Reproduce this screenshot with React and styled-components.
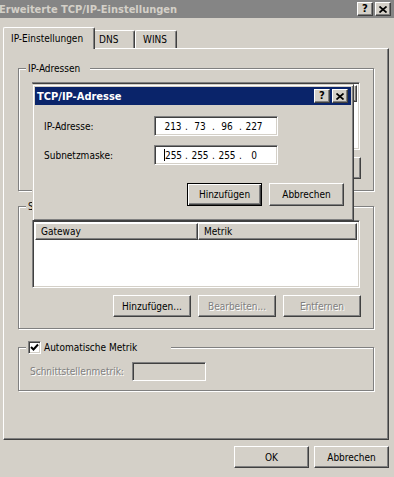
import React from "react";
import styled, { createGlobalStyle, css } from "styled-components";

const GlobalStyle = createGlobalStyle`
  html, body {
    margin: 0;
    padding: 0;
    background: #d4d0c8;
  }
  body {
    font-family: "DejaVu Sans Condensed", "Liberation Sans", sans-serif;
    font-size: 10px;
    color: #000;
  }
`;

const raised = css`
  border: 1px solid;
  border-color: #fff #404040 #404040 #fff;
  box-shadow: inset -1px -1px #808080;
`;

const sunken = css`
  border: 1px solid;
  border-color: #808080 #fff #fff #808080;
  box-shadow: inset 1px 1px #404040, inset -1px -1px #d4d0c8;
`;

const Window = styled.div`
  position: relative;
  width: 394px;
  height: 477px;
  overflow: hidden;
  background: #d4d0c8;
  display: flex;
  flex-direction: column;
`;

const TitleBar = styled.div`
  height: 18px;
  flex: 0 0 auto;
  display: flex;
  align-items: center;
  justify-content: space-between;
  padding-right: 3px;
  background: ${(p) => (p.active ? "#0a246a" : "#858585")};
  color: ${(p) => (p.active ? "#fff" : "#d4d0c8")};
  font-weight: bold;
  font-size: 11px;
`;

const TitleText = styled.span`
  white-space: nowrap;
  margin-left: ${(p) => p.indent || 0}px;
`;

const CaptionButtons = styled.div`
  display: flex;
  gap: 2px;
`;

const CaptionButton = styled.div`
  box-sizing: border-box;
  width: 16px;
  height: 14px;
  ${raised};
  background: #d4d0c8;
  display: flex;
  align-items: center;
  justify-content: center;
  color: #000;
  font-family: "DejaVu Sans", sans-serif;
  font-weight: bold;
  font-size: 10px;
  line-height: 1;
`;

const Content = styled.div`
  flex: 1;
  padding: 9px 5px 0 3px;
  display: flex;
  flex-direction: column;
`;

const TabStrip = styled.div`
  display: flex;
  align-items: flex-end;
  height: 21px;
  padding-left: 2px;
  position: relative;
  z-index: 1;
`;

const Tab = styled.div`
  box-sizing: border-box;
  width: ${(p) => p.width}px;
  height: ${(p) => (p.selected ? 22 : 18)}px;
  margin: 0 ${(p) => (p.selected ? -2 : 0)}px ${(p) => (p.selected ? -1 : 0)}px;
  padding: ${(p) => (p.selected ? 5 : 3)}px 0 0 ${(p) => p.pad || 5}px;
  position: relative;
  z-index: ${(p) => (p.selected ? 2 : 1)};
  background: #d4d0c8;
  border-top: 1px solid #fff;
  border-left: 1px solid #fff;
  border-right: 1px solid #404040;
  border-radius: 2px 2px 0 0;
  box-shadow: inset -1px 0 #808080;
  white-space: nowrap;
`;

const Panel = styled.div`
  box-sizing: border-box;
  height: 392px;
  ${raised};
  background: #d4d0c8;
  padding: 13px 14px 0 14px;
  display: flex;
  flex-direction: column;
  position: relative;
`;

const Group = styled.fieldset`
  margin: ${(p) => p.top || 0}px 0 0;
  padding: 0;
  min-width: 0;
  height: ${(p) => p.height}px;
  box-sizing: border-box;
  border: 1px solid #808080;
  box-shadow: inset 1px 1px #fff, 1px 1px #fff;
`;

const Legend = styled.legend`
  margin-left: 7px;
  padding: 0 ${(p) => p.padRight || 3}px 0 2px;
  line-height: 13px;
  height: 13px;
  background: #d4d0c8;
  display: flex;
  align-items: center;
  gap: 3px;
`;

const GroupBody = styled.div`
  padding: ${(p) => p.padding};
  display: flex;
  flex-direction: ${(p) => (p.row ? "row" : "column")};
  align-items: ${(p) => (p.row ? "center" : "stretch")};
`;

const ListView = styled.div`
  box-sizing: border-box;
  height: 68px;
  margin: 0 13px;
  ${sunken};
  background: #fff;
  padding: 2px;
`;

const ListHeader = styled.div`
  display: flex;
  height: 17px;
`;

const HeaderCell = styled.div`
  box-sizing: border-box;
  width: ${(p) => p.width}px;
  flex: ${(p) => (p.grow ? "1" : "0 0 auto")};
  ${raised};
  background: #d4d0c8;
  padding: 2px 0 0 5px;
  line-height: 12px;
`;

const ButtonRow = styled.div`
  display: flex;
  justify-content: flex-end;
  gap: ${(p) => p.gap || 7}px;
  margin-top: ${(p) => p.top || 0}px;
  padding-right: ${(p) => p.right || 0}px;
`;

const Button = styled.div`
  box-sizing: border-box;
  width: ${(p) => p.width || 75}px;
  height: ${(p) => p.height || 23}px;
  background: #d4d0c8;
  display: flex;
  align-items: center;
  justify-content: center;
  white-space: nowrap;
  ${(p) =>
    p.primary
      ? css`
          border: 1px solid #000;
          box-shadow: inset 1px 1px #fff, inset -1px -1px #404040,
            inset -2px -2px #808080;
        `
      : raised};
  color: ${(p) => (p.disabled ? "#808080" : "#000")};
  text-shadow: ${(p) => (p.disabled ? "1px 1px #fff" : "none")};
`;

const CheckBox = styled.div`
  box-sizing: border-box;
  width: 13px;
  height: 13px;
  ${sunken};
  background: #fff;
  display: flex;
  align-items: center;
  justify-content: center;
`;

const FieldLabel = styled.span`
  color: ${(p) => (p.disabled ? "#808080" : "#000")};
  text-shadow: ${(p) => (p.disabled ? "1px 1px #fff" : "none")};
  white-space: nowrap;
`;

const TextBox = styled.div`
  box-sizing: border-box;
  width: ${(p) => p.width}px;
  height: ${(p) => p.height || 20}px;
  margin-left: ${(p) => p.left || 0}px;
  ${sunken};
  background: ${(p) => (p.disabled ? "#d4d0c8" : "#fff")};
  display: flex;
  align-items: center;
  padding-left: 7px;
`;

const Octet = styled.span`
  width: 22px;
  text-align: center;
  display: inline-flex;
  justify-content: center;
  align-items: center;
`;

const Dot = styled.span`
  width: 5px;
  text-align: center;
`;

const Caret = styled.span`
  display: inline-block;
  width: 1px;
  height: 12px;
  background: #000;
`;

const Dialog = styled.div`
  position: absolute;
  left: 32px;
  top: 84px;
  width: 322px;
  height: 137px;
  box-sizing: border-box;
  border: 1px solid;
  border-color: #d4d0c8 #404040 #404040 #d4d0c8;
  box-shadow: inset 1px 1px #fff, inset -1px -1px #808080;
  background: #d4d0c8;
  padding: 2px;
  z-index: 5;
`;

const DialogBody = styled.div`
  padding: 11px 7px 0 9px;
`;

const FormGrid = styled.div`
  display: grid;
  grid-template-columns: 110px 124px;
  row-gap: 9px;
  align-items: center;
`;

const CloseGlyph = () => (
  <svg width="8" height="7" viewBox="0 0 8 7">
    <path d="M0.5 0.5 L7.5 6.5 M7.5 0.5 L0.5 6.5" stroke="#000" strokeWidth="1.7" />
  </svg>
);

const CheckGlyph = () => (
  <svg width="9" height="9" viewBox="0 0 9 9">
    <polyline points="1,4 3.5,6.5 8,1.5" fill="none" stroke="#000" strokeWidth="2" />
  </svg>
);

const Caption = () => (
  <CaptionButtons>
    <CaptionButton>?</CaptionButton>
    <CaptionButton>
      <CloseGlyph />
    </CaptionButton>
  </CaptionButtons>
);

const IpField = ({ parts, caret }) => (
  <TextBox width={124}>
    {parts.map((part, i) => (
      <React.Fragment key={i}>
        {i > 0 && <Dot>.</Dot>}
        <Octet>
          {caret && i === 0 && <Caret />}
          {part}
        </Octet>
      </React.Fragment>
    ))}
  </TextBox>
);

const RouteGroup = ({ label, columns, top, labelPad }) => (
  <Group top={top} height={129}>
    <Legend padRight={labelPad}>{label}</Legend>
    <GroupBody padding="7px 0 0">
      <ListView>
        <ListHeader>
          <HeaderCell width={163}>{columns[0]}</HeaderCell>
          <HeaderCell grow>{columns[1]}</HeaderCell>
        </ListHeader>
      </ListView>
      <ButtonRow top={7} right={12}>
        <Button width={78} height={22}>Hinzufügen...</Button>
        <Button width={78} height={22} disabled>Bearbeiten...</Button>
        <Button width={78} height={22} disabled>Entfernen</Button>
      </ButtonRow>
    </GroupBody>
  </Group>
);

export default function App() {
  return (
    <Window>
      <GlobalStyle />
      <TitleBar>
        <TitleText indent={-1}>Erweiterte TCP/IP-Einstellungen</TitleText>
        <Caption />
      </TitleBar>
      <Content>
        <TabStrip>
          <Tab selected width={92} pad={7}>IP-Einstellungen</Tab>
          <Tab width={42}>DNS</Tab>
          <Tab width={42} pad={7}>WINS</Tab>
        </TabStrip>
        <Panel>
          <RouteGroup label="IP-Adressen" columns={["IP-Adresse", "Subnetzmaske"]} labelPad={10} />
          <RouteGroup label="Standardgateways" columns={["Gateway", "Metrik"]} top={9} />
          <Group top={12} height={50}>
            <Legend padRight={34}>
              <CheckBox>
                <CheckGlyph />
              </CheckBox>
              Automatische Metrik
            </Legend>
            <GroupBody row padding="8px 0 0 11px">
              <FieldLabel disabled>Schnittstellenmetrik:</FieldLabel>
              <TextBox disabled width={74} height={19} left={8} />
            </GroupBody>
          </Group>
        </Panel>
        <ButtonRow top={6} gap={5}>
          <Button height={22}>OK</Button>
          <Button height={22}>Abbrechen</Button>
        </ButtonRow>
      </Content>

      <Dialog>
        <TitleBar active>
          <TitleText indent={2}>TCP/IP-Adresse</TitleText>
          <Caption />
        </TitleBar>
        <DialogBody>
          <FormGrid>
            <FieldLabel>IP-Adresse:</FieldLabel>
            <IpField parts={["213", "73", "96", "227"]} />
            <FieldLabel>Subnetzmaske:</FieldLabel>
            <IpField parts={["255", "255", "255", "0"]} caret />
          </FormGrid>
          <ButtonRow top={18} gap={7}>
            <Button primary>Hinzufügen</Button>
            <Button>Abbrechen</Button>
          </ButtonRow>
        </DialogBody>
      </Dialog>
    </Window>
  );
}
